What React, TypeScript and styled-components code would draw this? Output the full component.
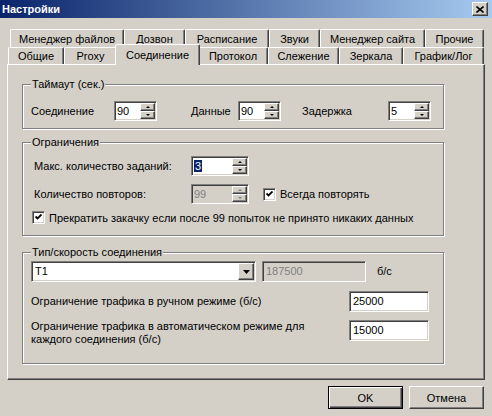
import React from 'react';
import styled, { createGlobalStyle, css } from 'styled-components';

const GlobalStyle = createGlobalStyle`
  html, body {
    margin: 0;
    padding: 0;
    background: #d4d0c8;
  }
  body {
    font-family: "Liberation Sans", Arial, sans-serif;
    font-size: 11px;
    color: #000;
  }
  * {
    box-sizing: border-box;
  }
`;

const sunken = css`
  border: 1px solid;
  border-color: #808080 #ffffff #ffffff #808080;
  box-shadow: inset 1px 1px 0 #404040, inset -1px -1px 0 #d4d0c8;
`;

const raised = css`
  border: 1px solid;
  border-color: #ffffff #404040 #404040 #ffffff;
  box-shadow: inset -1px -1px 0 #808080;
  background: #d4d0c8;
`;

const row1Tabs = [
  { title: 'Менеджер файлов', width: 114 },
  { title: 'Дозвон', width: 61 },
  { title: 'Расписание', width: 84 },
  { title: 'Звуки', width: 51 },
  { title: 'Менеджер сайта', width: 105 },
  { title: 'Прочие', width: 59 },
];

const row2Tabs = [
  { title: 'Общие', width: 56 },
  { title: 'Proxy', width: 53 },
  { title: 'Соединение', width: 81, active: true },
  { title: 'Протокол', width: 70 },
  { title: 'Слежение', width: 71 },
  { title: 'Зеркала', width: 64 },
  { title: 'График/Лог', width: 81 },
];

const SpinBox: React.FC<{ value: React.ReactNode; width: number; disabled?: boolean }> = ({
  value,
  width,
  disabled,
}) => (
  <SpinField $w={width} $disabled={disabled}>
    <SpinValue $disabled={disabled}>{value}</SpinValue>
    <SpinButtons>
      <SpinButton>
        <Arrow $dir="up" $disabled={disabled} />
      </SpinButton>
      <SpinButton>
        <Arrow $dir="down" $disabled={disabled} />
      </SpinButton>
    </SpinButtons>
  </SpinField>
);

const CheckBox: React.FC<{ checked?: boolean }> = ({ checked }) => (
  <CheckFrame>
    {checked && (
      <svg width="7" height="7" viewBox="0 0 7 7">
        <polyline points="0.5,2.5 2.5,4.5 6.5,0.5" fill="none" stroke="#000" strokeWidth="1.8" />
      </svg>
    )}
  </CheckFrame>
);

export default function App() {
  return (
    <>
      <GlobalStyle />
      <Window>
        <TitleBar>
          <Title>Настройки</Title>
          <CloseButton>
            <svg width="8" height="7" viewBox="0 0 8 7">
              <path d="M0.5 0.5 L7.5 6.5 M7.5 0.5 L0.5 6.5" stroke="#000" strokeWidth="1.6" />
            </svg>
          </CloseButton>
        </TitleBar>

        <Body>
          <TabRow $offset={3} $h={18}>
            {row1Tabs.map((t) => (
              <Tab key={t.title} $w={t.width}>
                {t.title}
              </Tab>
            ))}
          </TabRow>
          <TabRow $offset={1} $h={17}>
            {row2Tabs.map((t) => (
              <Tab key={t.title} $w={t.width} $active={t.active}>
                {t.title}
              </Tab>
            ))}
          </TabRow>

          <Panel>
            <GroupBox $h={45}>
              <Caption>Таймаут (сек.)</Caption>
              <ControlRow $pt={16} $pl={8}>
                <Label $w={83}>Соединение</Label>
                <SpinBox value="90" width={43} />
                <Label $w={47} $ml={34}>
                  Данные
                </Label>
                <SpinBox value="90" width={43} />
                <Label $w={86} $ml={21}>
                  Задержка
                </Label>
                <SpinBox value="5" width={43} />
              </ControlRow>
            </GroupBox>

            <GroupBox $h={94} $mt={13}>
              <Caption>Ограничения</Caption>
              <ControlRow $pt={13} $pl={11}>
                <Label $w={157}>Макс. количество заданий:</Label>
                <SpinBox value={<Selection>3</Selection>} width={58} />
              </ControlRow>
              <ControlRow $pt={8} $pl={11}>
                <Label $w={157}>Количество повторов:</Label>
                <SpinBox value="99" width={58} disabled />
                <CheckOption $ml={14}>
                  <CheckBox checked />
                  Всегда повторять
                </CheckOption>
              </ControlRow>
              <ControlRow $pt={7} $pl={9}>
                <CheckOption>
                  <CheckBox checked />
                  Прекратить закачку если после 99 попыток не принято никаких данных
                </CheckOption>
              </ControlRow>
            </GroupBox>

            <GroupBox $h={112} $mt={16}>
              <Caption>Тип/скорость соединения</Caption>
              <ControlRow $pt={8} $pl={8}>
                <Combo>
                  <ComboValue>T1</ComboValue>
                  <ComboButton>
                    <svg width="7" height="4" viewBox="0 0 7 4">
                      <polygon points="0,0 7,0 3.5,4" fill="#000" />
                    </svg>
                  </ComboButton>
                </Combo>
                <TextField $w={104} $disabled $ml={6}>
                  187500
                </TextField>
                <Label $ml={11}>б/с</Label>
              </ControlRow>
              <ControlRow $pt={9} $pl={8}>
                <Label $w={318}>Ограничение трафика в ручном режиме (б/с)</Label>
                <TextField $w={80}>25000</TextField>
              </ControlRow>
              <ControlRow $pt={8} $pl={8} $top>
                <Label $w={318} $multi>
                  Ограничение трафика в автоматическом режиме для
                  <br />
                  каждого соединения (б/с)
                </Label>
                <TextField $w={80}>15000</TextField>
              </ControlRow>
            </GroupBox>
          </Panel>

          <ButtonRow>
            <Button $default>OK</Button>
            <Button>Отмена</Button>
          </ButtonRow>
        </Body>
      </Window>
    </>
  );
}

// Styled Components
const Window = styled.div`
  width: 492px;
  height: 416px;
  background: #d4d0c8;
  overflow: hidden;
  display: flex;
  flex-direction: column;
`;

const TitleBar = styled.div`
  height: 18px;
  flex: none;
  display: flex;
  align-items: center;
  justify-content: space-between;
  padding: 0 4px 0 2px;
  background: linear-gradient(to right, #0a246a, #a6caf0);
`;

const Title = styled.span`
  color: #fff;
  font-weight: bold;
  font-size: 11px;
`;

const CloseButton = styled.div`
  ${raised};
  width: 16px;
  height: 14px;
  display: flex;
  align-items: center;
  justify-content: center;
`;

const Body = styled.div`
  padding: 11px 7px 0 7px;
  display: flex;
  flex-direction: column;
`;

const TabRow = styled.div<{ $offset: number; $h: number }>`
  display: flex;
  height: ${(p) => p.$h}px;
  margin-left: ${(p) => p.$offset}px;
`;

const Tab = styled.div<{ $w: number; $active?: boolean }>`
  flex: none;
  width: ${(p) => p.$w}px;
  display: flex;
  align-items: center;
  justify-content: center;
  white-space: nowrap;
  background: #d4d0c8;
  border-top: 1px solid #fff;
  border-left: 1px solid #fff;
  border-right: 1px solid #404040;
  box-shadow: inset -1px 0 0 #808080;
  border-radius: 2px 2px 0 0;

  ${(p) =>
    p.$active &&
    css`
      position: relative;
      z-index: 1;
      align-self: flex-start;
      height: 21px;
      width: ${p.$w + 4}px;
      margin: -3px -2px -1px;
      padding-bottom: 1px;
    `}
`;

const Panel = styled.div`
  width: 478px;
  height: 316px;
  border-top: 1px solid #fff;
  border-left: 1px solid #fff;
  border-right: 1px solid #404040;
  border-bottom: 1px solid #404040;
  box-shadow: inset -1px -1px 0 #808080;
  padding: 19px 0 0 14px;
  display: flex;
  flex-direction: column;
`;

const GroupBox = styled.div<{ $h: number; $mt?: number }>`
  position: relative;
  width: 422px;
  height: ${(p) => p.$h}px;
  margin-top: ${(p) => p.$mt ?? 0}px;
  border: 1px solid #808080;
  box-shadow: 1px 1px 0 #fff, inset 1px 1px 0 #fff;
`;

const Caption = styled.span`
  position: absolute;
  top: -7px;
  left: 8px;
  padding: 0 1px;
  line-height: 13px;
  background: #d4d0c8;
`;

const ControlRow = styled.div<{ $pt: number; $pl: number; $top?: boolean }>`
  display: flex;
  align-items: ${(p) => (p.$top ? 'flex-start' : 'center')};
  padding-top: ${(p) => p.$pt}px;
  padding-left: ${(p) => p.$pl}px;
`;

const Label = styled.span<{ $w?: number; $ml?: number; $multi?: boolean }>`
  flex: none;
  width: ${(p) => (p.$w ? `${p.$w}px` : 'auto')};
  margin-left: ${(p) => p.$ml ?? 0}px;
  line-height: 13px;
  white-space: nowrap;
  ${(p) =>
    p.$multi &&
    css`
      margin-top: 0;
    `}
`;

const SpinField = styled.div<{ $w: number; $disabled?: boolean }>`
  ${sunken};
  flex: none;
  width: ${(p) => p.$w}px;
  height: 20px;
  padding: 1px;
  display: flex;
  background: ${(p) => (p.$disabled ? '#d4d0c8' : '#fff')};
`;

const SpinValue = styled.div<{ $disabled?: boolean }>`
  flex: 1;
  padding-left: 1px;
  line-height: 16px;
  color: ${(p) => (p.$disabled ? '#808080' : '#000')};
`;

const Selection = styled.span`
  background: #0a246a;
  color: #fff;
  padding: 0 1px;
`;

const SpinButtons = styled.div`
  flex: none;
  width: 15px;
  display: flex;
  flex-direction: column;
`;

const SpinButton = styled.div`
  ${raised};
  flex: 1;
  display: flex;
  align-items: center;
  justify-content: center;
`;

const Arrow = styled.div<{ $dir: 'up' | 'down'; $disabled?: boolean }>`
  width: 0;
  height: 0;
  border-left: 2px solid transparent;
  border-right: 2px solid transparent;
  ${(p) =>
    p.$dir === 'up'
      ? css`
          border-bottom: 2px solid ${p.$disabled ? '#808080' : '#000'};
        `
      : css`
          border-top: 2px solid ${p.$disabled ? '#808080' : '#000'};
        `}
`;

const CheckOption = styled.label<{ $ml?: number }>`
  display: flex;
  align-items: center;
  gap: 4px;
  margin-left: ${(p) => p.$ml ?? 0}px;
  white-space: nowrap;
`;

const CheckFrame = styled.span`
  ${sunken};
  flex: none;
  width: 13px;
  height: 13px;
  background: #fff;
  display: flex;
  align-items: center;
  justify-content: center;
`;

const Combo = styled.div`
  ${sunken};
  flex: none;
  width: 225px;
  height: 21px;
  padding: 1px;
  display: flex;
  background: #fff;
`;

const ComboValue = styled.div`
  flex: 1;
  padding-left: 2px;
  line-height: 17px;
`;

const ComboButton = styled.div`
  ${raised};
  width: 16px;
  display: flex;
  align-items: center;
  justify-content: center;
`;

const TextField = styled.div<{ $w: number; $disabled?: boolean; $ml?: number }>`
  ${sunken};
  flex: none;
  width: ${(p) => p.$w}px;
  height: 21px;
  margin-left: ${(p) => p.$ml ?? 0}px;
  padding: 1px 3px;
  line-height: 17px;
  background: ${(p) => (p.$disabled ? '#d4d0c8' : '#fff')};
  color: ${(p) => (p.$disabled ? '#808080' : '#000')};
`;

const ButtonRow = styled.div`
  display: flex;
  justify-content: flex-end;
  gap: 6px;
  margin: 6px 1px 0 0;
`;

const Button = styled.div<{ $default?: boolean }>`
  width: 75px;
  height: 23px;
  display: flex;
  align-items: center;
  justify-content: center;
  background: #d4d0c8;
  ${(p) =>
    p.$default
      ? css`
          border: 1px solid #000;
          box-shadow: inset 1px 1px 0 #fff, inset -1px -1px 0 #404040, inset -2px -2px 0 #808080;
        `
      : css`
          border: 1px solid;
          border-color: #fff #404040 #404040 #fff;
          box-shadow: inset -1px -1px 0 #808080;
        `}
`;
